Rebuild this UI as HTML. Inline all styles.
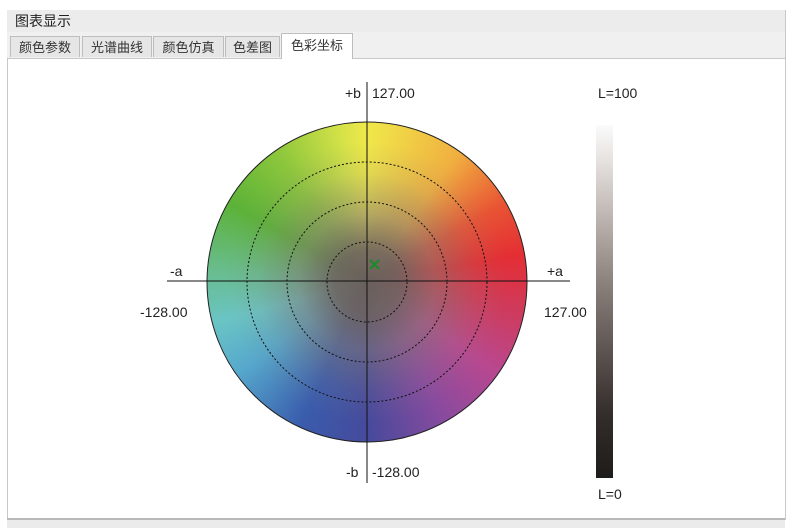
<!DOCTYPE html>
<html><head><meta charset="utf-8"><style>
body{margin:0;width:800px;height:530px;background:#fff;position:relative;overflow:hidden;font-family:"Liberation Sans","Noto Sans CJK SC",sans-serif;}
.frame{position:absolute;left:7px;top:10px;width:777px;height:508px;background:#fff;border:1px solid #c8c8c8;}
.hdr{position:absolute;left:7px;top:10px;width:778px;height:22px;background:#ececec;font-size:14px;line-height:22px;color:#222;padding-left:8px;box-sizing:border-box;}
.tabbar{position:absolute;left:7px;top:32px;width:778px;height:26px;background:#f0f0f0;border-bottom:1px solid #c8c8c8;}
.tab{position:absolute;top:4px;height:21px;background:#e6e6e6;border:1px solid #bdbdbd;border-bottom:none;font-size:13px;line-height:21px;text-align:center;color:#333;box-sizing:border-box;}
.tab.act{top:1px;height:26px;background:#fff;line-height:24px;}
.strip{position:absolute;left:7px;top:518px;width:778px;height:8px;background:#ebebeb;border-top:2px solid #b9b9b9;}
.t{position:absolute;font-size:14px;color:#222;}
</style></head><body>
<div class="frame"></div>
<div class="hdr">图表显示</div>
<div class="tabbar">
<div class="tab" style="left:3px;width:70px">颜色参数</div>
<div class="tab" style="left:75px;width:70px">光谱曲线</div>
<div class="tab" style="left:146px;width:71px">颜色仿真</div>
<div class="tab" style="left:218px;width:55px">色差图</div>
<div class="tab act" style="left:274px;width:72px">色彩坐标</div>
</div>
<div class="strip"></div>
<div style="position:absolute;left:207px;top:122px;width:320px;height:320px;border-radius:50%;background:conic-gradient(from 0deg,#f0e84a 0deg,#f0b040 35deg,#e85434 60deg,#e42e34 80deg,#d03a5a 100deg,#b84890 125deg,#8a4a9e 150deg,#464a9c 180deg,#3a5cac 205deg,#56a8cc 235deg,#6ac4c4 255deg,#68bc8c 275deg,#5cb238 300deg,#8cc63c 325deg,#d4e248 350deg,#f0e84a 360deg);"></div>
<div style="position:absolute;left:207px;top:122px;width:320px;height:320px;border-radius:50%;background:radial-gradient(circle at 50% 50%,rgba(105,96,92,1) 0%,rgba(110,100,96,0.92) 14%,rgba(130,120,115,0.55) 30%,rgba(140,130,125,0.15) 48%,rgba(140,130,125,0) 62%);"></div>
<svg style="position:absolute;left:0;top:0" width="800" height="530">
<circle cx="367" cy="282" r="160" fill="none" stroke="#222" stroke-width="1"/>
<g fill="none" stroke="#111" stroke-width="1" stroke-dasharray="2 2">
<circle cx="367" cy="282" r="40"/><circle cx="367" cy="282" r="80"/><circle cx="367" cy="282" r="120"/>
</g>
<line x1="167" y1="281" x2="570" y2="281" stroke="#111"/>
<line x1="367" y1="82" x2="367" y2="483" stroke="#111"/>
<g stroke="#1a8a2a" stroke-width="2.2"><line x1="370" y1="260" x2="379" y2="269"/><line x1="379" y1="260" x2="370" y2="269"/>
<line x1="599" y1="188" x2="608" y2="197"/><line x1="608" y1="188" x2="599" y2="197"/></g>
</svg>
<div style="position:absolute;left:596px;top:125px;width:17px;height:353px;background:linear-gradient(#fbfbfb 0%,#e6e2e0 10%,#c0b8b4 25%,#8a807c 45%,#5a524f 65%,#332d2b 82%,#1e1c1a 100%);"></div>
<div class="t" style="left:345px;top:85px">+b</div>
<div class="t" style="left:372px;top:85px">127.00</div>
<div class="t" style="left:346px;top:464px">-b</div>
<div class="t" style="left:372px;top:464px">-128.00</div>
<div class="t" style="left:170px;top:263px">-a</div>
<div class="t" style="left:547px;top:263px">+a</div>
<div class="t" style="left:140px;top:304px">-128.00</div>
<div class="t" style="left:544px;top:304px">127.00</div>
<div class="t" style="left:598px;top:85px">L=100</div>
<div class="t" style="left:598px;top:486px">L=0</div>
</body></html>
